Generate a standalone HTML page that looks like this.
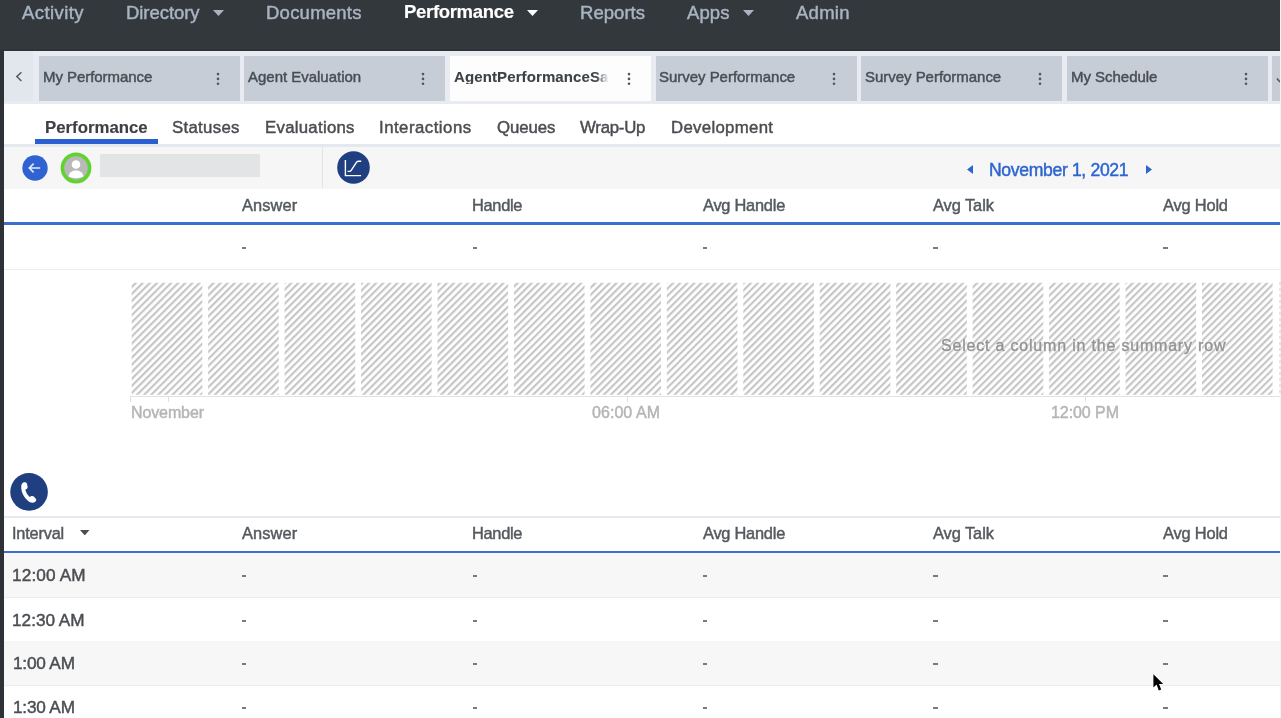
<!DOCTYPE html>
<html><head><meta charset="utf-8"><style>
html,body{margin:0;padding:0;}
body{width:1281px;height:718px;position:relative;overflow:hidden;background:#fff;font-family:"Liberation Sans",sans-serif;}
.r{position:absolute;display:block;}
.t{position:absolute;white-space:nowrap;line-height:1;will-change:transform;-webkit-text-stroke:0.45px currentColor;}
</style></head><body>
<div class="r" style="left:0px;top:0px;width:1281px;height:718px;background:#ffffff;"></div>
<div class="r" style="left:0px;top:0px;width:1281px;height:51px;background:#33383d;"></div>
<div class="r" style="left:0px;top:49px;width:1281px;height:2px;background:#2f3438;"></div>
<div class="r" style="left:0px;top:51px;width:4px;height:667px;background:#2e3236;"></div>
<span class="t" style="left:22.20px;top:4.25px;font-size:18.50px;letter-spacing:0.416px;color:#a9b4c2;font-weight:400;">Activity</span>
<span class="t" style="left:126.10px;top:4.25px;font-size:18.50px;letter-spacing:-0.052px;color:#a9b4c2;font-weight:400;">Directory</span>
<span class="t" style="left:265.90px;top:4.25px;font-size:18.50px;letter-spacing:0.241px;color:#a9b4c2;font-weight:400;">Documents</span>
<span class="t" style="left:403.70px;top:3.25px;font-size:18.50px;letter-spacing:-0.311px;color:#ffffff;font-weight:700;-webkit-text-stroke:0.15px currentColor;">Performance</span>
<span class="t" style="left:579.70px;top:4.25px;font-size:18.50px;letter-spacing:0.039px;color:#a9b4c2;font-weight:400;">Reports</span>
<span class="t" style="left:687.20px;top:4.25px;font-size:18.50px;letter-spacing:0.113px;color:#a9b4c2;font-weight:400;">Apps</span>
<span class="t" style="left:795.70px;top:4.25px;font-size:18.50px;letter-spacing:0.263px;color:#a9b4c2;font-weight:400;">Admin</span>
<svg class="r" style="left:213px;top:9.8px" width="11" height="6.0" viewBox="0 0 10 5" preserveAspectRatio="none"><path d="M0 0H10L5 5Z" fill="#a9b4c2"/></svg>
<svg class="r" style="left:527px;top:9.8px" width="11" height="6.0" viewBox="0 0 10 5" preserveAspectRatio="none"><path d="M0 0H10L5 5Z" fill="#ffffff"/></svg>
<svg class="r" style="left:743px;top:9.8px" width="11" height="6.0" viewBox="0 0 10 5" preserveAspectRatio="none"><path d="M0 0H10L5 5Z" fill="#a9b4c2"/></svg>
<div class="r" style="left:4px;top:51px;width:1276px;height:53px;background:#e8ebf1;"></div>
<div class="r" style="left:4px;top:51px;width:28.5px;height:49.5px;background:#e2e6ed;"></div>
<svg class="r" style="left:14px;top:70px" width="10" height="13" viewBox="0 0 10 13"><path d="M7.4 2.2L2.8 6.6L7.4 11" stroke="#575d64" stroke-width="1.5" fill="none"/></svg>
<div class="r" style="left:38.9px;top:56px;width:201.0px;height:44.5px;background:#c6cdd6;"></div>
<span class="t" style="left:42.80px;top:69.25px;font-size:15.00px;letter-spacing:-0.049px;color:#484e55;font-weight:400;">My Performance</span>
<svg class="r" style="left:215.70px;top:71px" width="4" height="15" viewBox="0 0 4 15"><circle cx="2" cy="3.1" r="1.3" fill="#50565e"/><circle cx="2" cy="7.9" r="1.3" fill="#50565e"/><circle cx="2" cy="12.7" r="1.3" fill="#50565e"/></svg>
<div class="r" style="left:244.47px;top:56px;width:201.0px;height:44.5px;background:#c6cdd6;"></div>
<span class="t" style="left:248.00px;top:69.25px;font-size:15.00px;letter-spacing:-0.021px;color:#484e55;font-weight:400;">Agent Evaluation</span>
<svg class="r" style="left:421.27px;top:71px" width="4" height="15" viewBox="0 0 4 15"><circle cx="2" cy="3.1" r="1.3" fill="#50565e"/><circle cx="2" cy="7.9" r="1.3" fill="#50565e"/><circle cx="2" cy="12.7" r="1.3" fill="#50565e"/></svg>
<div class="r" style="left:450.04px;top:56px;width:201.0px;height:44.5px;background:#fdfdfd;"></div>
<span class="t" style="left:453.70px;top:69.25px;font-size:15.00px;letter-spacing:0.112px;color:#3d4247;font-weight:700;-webkit-mask-image:linear-gradient(90deg,#000 142px,transparent 155px);mask-image:linear-gradient(90deg,#000 142px,transparent 155px);-webkit-text-stroke:0.1px currentColor;">AgentPerformanceSav</span>
<svg class="r" style="left:626.84px;top:71px" width="4" height="15" viewBox="0 0 4 15"><circle cx="2" cy="3.1" r="1.3" fill="#50565e"/><circle cx="2" cy="7.9" r="1.3" fill="#50565e"/><circle cx="2" cy="12.7" r="1.3" fill="#50565e"/></svg>
<div class="r" style="left:655.61px;top:56px;width:201.0px;height:44.5px;background:#c6cdd6;"></div>
<span class="t" style="left:659.40px;top:69.25px;font-size:15.00px;letter-spacing:-0.031px;color:#484e55;font-weight:400;">Survey Performance</span>
<svg class="r" style="left:832.41px;top:71px" width="4" height="15" viewBox="0 0 4 15"><circle cx="2" cy="3.1" r="1.3" fill="#50565e"/><circle cx="2" cy="7.9" r="1.3" fill="#50565e"/><circle cx="2" cy="12.7" r="1.3" fill="#50565e"/></svg>
<div class="r" style="left:861.18px;top:56px;width:201.0px;height:44.5px;background:#c6cdd6;"></div>
<span class="t" style="left:865.20px;top:69.25px;font-size:15.00px;letter-spacing:-0.031px;color:#484e55;font-weight:400;">Survey Performance</span>
<svg class="r" style="left:1037.98px;top:71px" width="4" height="15" viewBox="0 0 4 15"><circle cx="2" cy="3.1" r="1.3" fill="#50565e"/><circle cx="2" cy="7.9" r="1.3" fill="#50565e"/><circle cx="2" cy="12.7" r="1.3" fill="#50565e"/></svg>
<div class="r" style="left:1066.75px;top:56px;width:201.0px;height:44.5px;background:#c6cdd6;"></div>
<span class="t" style="left:1070.70px;top:69.25px;font-size:15.00px;letter-spacing:-0.031px;color:#484e55;font-weight:400;">My Schedule</span>
<svg class="r" style="left:1243.55px;top:71px" width="4" height="15" viewBox="0 0 4 15"><circle cx="2" cy="3.1" r="1.3" fill="#50565e"/><circle cx="2" cy="7.9" r="1.3" fill="#50565e"/><circle cx="2" cy="12.7" r="1.3" fill="#50565e"/></svg>
<div class="r" style="left:1272.32px;top:56px;width:7.68px;height:44.5px;background:#c6cdd6;"></div>
<svg class="r" style="left:1275px;top:77px" width="6" height="8" viewBox="0 0 6 8"><path d="M2 1.5L5 5" stroke="#50565e" stroke-width="1.6"/></svg>
<div class="r" style="left:1280px;top:0px;width:1px;height:718px;background:#f4f4f4;"></div>
<span class="t" style="left:45.40px;top:120.25px;font-size:16.80px;letter-spacing:0.008px;color:#3c3f43;font-weight:700;-webkit-text-stroke:0.15px currentColor;">Performance</span>
<span class="t" style="left:172.20px;top:120.25px;font-size:16.80px;letter-spacing:0.304px;color:#4a4d51;font-weight:400;">Statuses</span>
<span class="t" style="left:265.10px;top:120.25px;font-size:16.80px;letter-spacing:0.274px;color:#4a4d51;font-weight:400;">Evaluations</span>
<span class="t" style="left:379.30px;top:120.25px;font-size:16.80px;letter-spacing:0.487px;color:#4a4d51;font-weight:400;">Interactions</span>
<span class="t" style="left:496.50px;top:120.25px;font-size:16.80px;letter-spacing:-0.087px;color:#4a4d51;font-weight:400;">Queues</span>
<span class="t" style="left:580.20px;top:120.25px;font-size:16.80px;letter-spacing:-0.233px;color:#4a4d51;font-weight:400;">Wrap-Up</span>
<span class="t" style="left:670.70px;top:120.25px;font-size:16.80px;letter-spacing:0.311px;color:#4a4d51;font-weight:400;">Development</span>
<div class="r" style="left:35px;top:139px;width:123px;height:4.5px;background:#2a5fcf;"></div>
<div class="r" style="left:4px;top:145.5px;width:1276px;height:43.2px;background:#f6f6f6;"></div>
<div class="r" style="left:4px;top:144.4px;width:1276px;height:2.2px;background:#e4e9f0;"></div>
<div class="r" style="left:322px;top:147px;width:1px;height:41px;background:#e4e4e4;"></div>
<svg class="r" style="left:22px;top:155px" width="26" height="26" viewBox="0 0 26 26"><circle cx="13" cy="13" r="12.7" fill="#2e63d1"/><path d="M7.3 13H18.2M11.6 8.6L7.3 13L11.6 17.4" stroke="#e4ebf8" stroke-width="1.6" fill="none"/></svg>
<svg class="r" style="left:60px;top:152px" width="32" height="32" viewBox="0 0 32 32"><circle cx="16" cy="16" r="13.6" fill="#b9b9b9" stroke="#61d22f" stroke-width="3.6"/><circle cx="16" cy="12.5" r="4.3" fill="#fff"/><path d="M8.5 24.5C9.5 19.8 12.5 18.5 16 18.5S22.5 19.8 23.5 24.5Q16 28 8.5 24.5Z" fill="#fff"/></svg>
<div class="r" style="left:100px;top:154px;width:160px;height:23px;background:#e3e4e6;"></div>
<svg class="r" style="left:337px;top:151.4px" width="33" height="33" viewBox="0 0 33 33"><circle cx="16.5" cy="16.5" r="16.3" fill="#1f3f80"/><path d="M8.4 9V24.6H24.1" stroke="#fff" stroke-width="1.4" fill="none"/><path d="M10.6 20.4H12.6Q13.6 20.4 14.2 19.4L19.6 11.2Q20.3 10.2 21.4 10.2H24.2" stroke="#fff" stroke-width="1.4" fill="none"/></svg>
<svg class="r" style="left:966.8px;top:164.7px" width="6" height="9" viewBox="0 0 6 9"><path d="M6 0V9L0 4.5Z" fill="#2d65cf"/></svg>
<span class="t" style="left:988.90px;top:162.25px;font-size:17.60px;letter-spacing:-0.346px;color:#2d65cf;font-weight:400;">November 1, 2021</span>
<svg class="r" style="left:1146.3px;top:164.7px" width="6" height="9" viewBox="0 0 6 9"><path d="M0 0V9L6 4.5Z" fill="#2d65cf"/></svg>
<span class="t" style="left:241.60px;top:197.25px;font-size:16.40px;letter-spacing:0.121px;color:#55595e;font-weight:400;">Answer</span>
<span class="t" style="left:472.40px;top:197.25px;font-size:16.40px;letter-spacing:-0.294px;color:#55595e;font-weight:400;">Handle</span>
<span class="t" style="left:702.50px;top:197.25px;font-size:16.40px;letter-spacing:-0.244px;color:#55595e;font-weight:400;">Avg Handle</span>
<span class="t" style="left:932.90px;top:197.25px;font-size:16.40px;letter-spacing:-0.060px;color:#55595e;font-weight:400;">Avg Talk</span>
<span class="t" style="left:1163.00px;top:197.25px;font-size:16.40px;letter-spacing:-0.179px;color:#55595e;font-weight:400;">Avg Hold</span>
<div class="r" style="left:4px;top:222.3px;width:1276px;height:2.6px;background:#3c6fd0;"></div>
<div class="r" style="left:241.9px;top:247px;width:4.6px;height:2px;background:#7a7a7a;"></div>
<div class="r" style="left:472.7px;top:247px;width:4.6px;height:2px;background:#7a7a7a;"></div>
<div class="r" style="left:702.8px;top:247px;width:4.6px;height:2px;background:#7a7a7a;"></div>
<div class="r" style="left:933.2px;top:247px;width:4.6px;height:2px;background:#7a7a7a;"></div>
<div class="r" style="left:1163.3px;top:247px;width:4.6px;height:2px;background:#7a7a7a;"></div>
<div class="r" style="left:4px;top:268.5px;width:1276px;height:1.3px;background:#ececec;"></div>
<svg class="r" style="left:0;top:0" width="1281" height="718" viewBox="0 0 1281 718"><defs><pattern id="hp" width="5.0" height="5.0" patternUnits="userSpaceOnUse" patternTransform="rotate(45)"><rect x="0" y="0" width="2.2" height="5.0" fill="#c6c6c6"/></pattern></defs><rect x="131.70" y="282.8" width="70.6" height="112" fill="url(#hp)"/><rect x="208.15" y="282.8" width="70.6" height="112" fill="url(#hp)"/><rect x="284.60" y="282.8" width="70.6" height="112" fill="url(#hp)"/><rect x="361.05" y="282.8" width="70.6" height="112" fill="url(#hp)"/><rect x="437.50" y="282.8" width="70.6" height="112" fill="url(#hp)"/><rect x="513.95" y="282.8" width="70.6" height="112" fill="url(#hp)"/><rect x="590.40" y="282.8" width="70.6" height="112" fill="url(#hp)"/><rect x="666.85" y="282.8" width="70.6" height="112" fill="url(#hp)"/><rect x="743.30" y="282.8" width="70.6" height="112" fill="url(#hp)"/><rect x="819.75" y="282.8" width="70.6" height="112" fill="url(#hp)"/><rect x="896.20" y="282.8" width="70.6" height="112" fill="url(#hp)"/><rect x="972.65" y="282.8" width="70.6" height="112" fill="url(#hp)"/><rect x="1049.10" y="282.8" width="70.6" height="112" fill="url(#hp)"/><rect x="1125.55" y="282.8" width="70.6" height="112" fill="url(#hp)"/><rect x="1202.00" y="282.8" width="70.6" height="112" fill="url(#hp)"/></svg>
<svg class="r" style="left:1278.5px;top:282px" width="2" height="113" viewBox="0 0 2 113"><line x1="1" y1="0" x2="1" y2="113" stroke="#cfcfcf" stroke-width="1" stroke-dasharray="3 3"/></svg>
<div class="r" style="left:130px;top:395.7px;width:1150px;height:1.2px;background:#e2e2e2;"></div>
<div class="r" style="left:130px;top:396px;width:1px;height:6px;background:#e0e0e0;"></div>
<div class="r" style="left:168px;top:396px;width:1px;height:6px;background:#e0e0e0;"></div>
<div class="r" style="left:626.5px;top:396px;width:1px;height:6px;background:#e0e0e0;"></div>
<div class="r" style="left:1085px;top:396px;width:1px;height:6px;background:#e0e0e0;"></div>
<span class="t" style="left:131.20px;top:405.25px;font-size:16.00px;letter-spacing:-0.115px;color:#b5b5b5;font-weight:400;">November</span>
<span class="t" style="left:591.90px;top:405.25px;font-size:16.00px;letter-spacing:0.057px;color:#b5b5b5;font-weight:400;">06:00 AM</span>
<span class="t" style="left:1051.20px;top:405.25px;font-size:16.00px;letter-spacing:-0.069px;color:#b5b5b5;font-weight:400;">12:00 PM</span>
<span class="t" style="left:940.70px;top:338.25px;font-size:16.00px;letter-spacing:0.805px;color:#939393;font-weight:400;text-shadow:0 0 1px #fff,0 0 1px #fff,0 0 2px #fff,0 0 2px #fff;">Select a column in the summary row</span>
<svg class="r" style="left:10px;top:472.6px" width="38" height="38" viewBox="0 0 38 38"><circle cx="19.05" cy="18.9" r="18.8" fill="#1f3f80"/><path d="M13.2 9.6C14.6 8.8 16.2 9.2 16.9 10.6L17.6 13.8C17.8 15 17.2 15.8 16.2 16.2L15.4 16.6C15.8 19.5 17.4 22 19.8 23.9L20.6 23.5C21.8 22.7 23.4 23 24.3 24L25.8 25.8C26.6 26.8 26.2 28.3 25 29C22.8 30.2 20 29.8 17.8 27.8C14 24.4 11.4 19.6 11.2 14.6C11.2 12 11.9 10.4 13.2 9.6Z" fill="#fff"/></svg>
<div class="r" style="left:4px;top:515.5px;width:1276px;height:2.6px;background:#e6eaf0;"></div>
<span class="t" style="left:11.50px;top:525.25px;font-size:16.30px;letter-spacing:-0.178px;color:#55595e;font-weight:400;">Interval</span>
<svg class="r" style="left:80px;top:529.8px" width="9.5" height="5.400000000000091" viewBox="0 0 10 5" preserveAspectRatio="none"><path d="M0 0H10L5 5Z" fill="#4b4f54"/></svg>
<span class="t" style="left:241.60px;top:525.25px;font-size:16.40px;letter-spacing:0.121px;color:#55595e;font-weight:400;">Answer</span>
<span class="t" style="left:472.40px;top:525.25px;font-size:16.40px;letter-spacing:-0.294px;color:#55595e;font-weight:400;">Handle</span>
<span class="t" style="left:702.50px;top:525.25px;font-size:16.40px;letter-spacing:-0.244px;color:#55595e;font-weight:400;">Avg Handle</span>
<span class="t" style="left:932.90px;top:525.25px;font-size:16.40px;letter-spacing:-0.060px;color:#55595e;font-weight:400;">Avg Talk</span>
<span class="t" style="left:1163.00px;top:525.25px;font-size:16.40px;letter-spacing:-0.179px;color:#55595e;font-weight:400;">Avg Hold</span>
<div class="r" style="left:4px;top:551px;width:1276px;height:2.6px;background:#3c6fd0;"></div>
<div class="r" style="left:4px;top:553px;width:1276px;height:44px;background:#f7f7f7;"></div>
<div class="r" style="left:4px;top:597px;width:1276px;height:1px;background:#e9ecf1;"></div>
<span class="t" style="left:11.90px;top:567.25px;font-size:17.20px;letter-spacing:0.133px;color:#4a4d51;font-weight:400;">12:00 AM</span>
<div class="r" style="left:241.9px;top:575px;width:4.6px;height:2px;background:#7a7a7a;"></div>
<div class="r" style="left:472.7px;top:575px;width:4.6px;height:2px;background:#7a7a7a;"></div>
<div class="r" style="left:702.8px;top:575px;width:4.6px;height:2px;background:#7a7a7a;"></div>
<div class="r" style="left:933.2px;top:575px;width:4.6px;height:2px;background:#7a7a7a;"></div>
<div class="r" style="left:1163.3px;top:575px;width:4.6px;height:2px;background:#7a7a7a;"></div>
<div class="r" style="left:4px;top:641px;width:1276px;height:1px;background:#e9ecf1;"></div>
<span class="t" style="left:11.90px;top:612.25px;font-size:17.20px;letter-spacing:0.004px;color:#4a4d51;font-weight:400;">12:30 AM</span>
<div class="r" style="left:241.9px;top:620px;width:4.6px;height:2px;background:#7a7a7a;"></div>
<div class="r" style="left:472.7px;top:620px;width:4.6px;height:2px;background:#7a7a7a;"></div>
<div class="r" style="left:702.8px;top:620px;width:4.6px;height:2px;background:#7a7a7a;"></div>
<div class="r" style="left:933.2px;top:620px;width:4.6px;height:2px;background:#7a7a7a;"></div>
<div class="r" style="left:1163.3px;top:620px;width:4.6px;height:2px;background:#7a7a7a;"></div>
<div class="r" style="left:4px;top:641px;width:1276px;height:44px;background:#f7f7f7;"></div>
<div class="r" style="left:4px;top:685px;width:1276px;height:1px;background:#e9ecf1;"></div>
<span class="t" style="left:12.90px;top:655.25px;font-size:17.20px;letter-spacing:-0.184px;color:#4a4d51;font-weight:400;">1:00 AM</span>
<div class="r" style="left:241.9px;top:663px;width:4.6px;height:2px;background:#7a7a7a;"></div>
<div class="r" style="left:472.7px;top:663px;width:4.6px;height:2px;background:#7a7a7a;"></div>
<div class="r" style="left:702.8px;top:663px;width:4.6px;height:2px;background:#7a7a7a;"></div>
<div class="r" style="left:933.2px;top:663px;width:4.6px;height:2px;background:#7a7a7a;"></div>
<div class="r" style="left:1163.3px;top:663px;width:4.6px;height:2px;background:#7a7a7a;"></div>
<div class="r" style="left:4px;top:729px;width:1276px;height:1px;background:#e9ecf1;"></div>
<span class="t" style="left:12.90px;top:699.25px;font-size:17.20px;letter-spacing:-0.184px;color:#4a4d51;font-weight:400;">1:30 AM</span>
<div class="r" style="left:241.9px;top:707px;width:4.6px;height:2px;background:#7a7a7a;"></div>
<div class="r" style="left:472.7px;top:707px;width:4.6px;height:2px;background:#7a7a7a;"></div>
<div class="r" style="left:702.8px;top:707px;width:4.6px;height:2px;background:#7a7a7a;"></div>
<div class="r" style="left:933.2px;top:707px;width:4.6px;height:2px;background:#7a7a7a;"></div>
<div class="r" style="left:1163.3px;top:707px;width:4.6px;height:2px;background:#7a7a7a;"></div>
<svg class="r" style="left:1150px;top:671px" width="18" height="24" viewBox="0 0 18 24"><path d="M3.4 3.2V16.4L6.6 13.6L8.8 19.4L11.2 18.4L9 12.9H13.2Z" fill="#000" stroke="#fff" stroke-width="1.2" stroke-linejoin="round" paint-order="stroke"/></svg>
</body></html>
